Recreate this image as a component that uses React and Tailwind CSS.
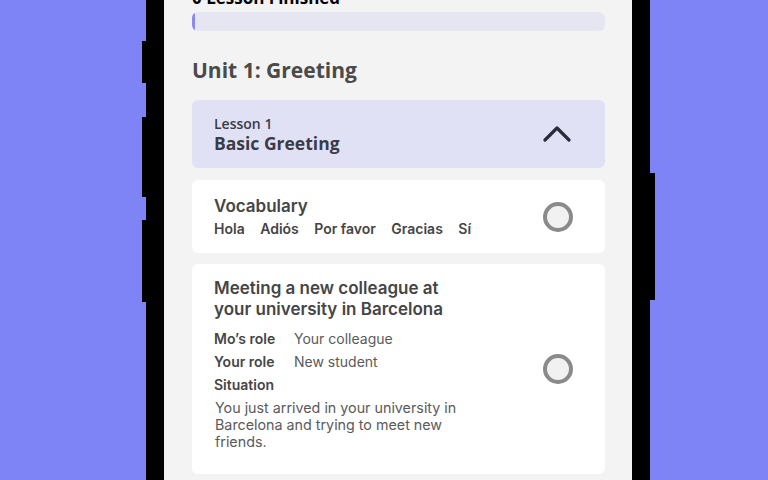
import React from "react";

const heading = { fontFamily: '"Open Sans", "DejaVu Sans", sans-serif' };
const body = { fontFamily: 'Inter, "Noto Sans", sans-serif' };

function StatusRing() {
    return (
        <div className="w-[30px] h-[30px] rounded-full border-[4px] border-[#8a8a8a] bg-[#f1f1f1] shrink-0" />
    );
}

function ChevronUp() {
    return (
        <svg width="28" height="18" viewBox="0 0 28 18" fill="none">
            <path d="M2 15 L14 3 L26 15" stroke="#2c2c3a" strokeWidth="3.2" strokeLinecap="round" strokeLinejoin="round" />
        </svg>
    );
}

export default function App() {
    const words = ["Hola", "Adiós", "Por favor", "Gracias", "Sí"];

    return (
        <div className="w-[768px] h-[480px] bg-[#7e83f6] flex pl-[146px] overflow-hidden">
            <div className="relative w-[504px] h-[480px]">
                {/* side buttons */}
                <div className="absolute left-[-4px] top-[41px] w-[4px] h-[42px] bg-black" />
                <div className="absolute left-[-4px] top-[117px] w-[4px] h-[80px] bg-black" />
                <div className="absolute left-[-4px] top-[220px] w-[4px] h-[82px] bg-black" />
                <div className="absolute right-[-5px] top-[173px] w-[5px] h-[127px] bg-black" />

                <div className="h-full border-x-[18px] border-black bg-[#f3f3f3] overflow-hidden">
                    <div className="px-[28px] pr-[27px] -mt-[12px]">
                        <p className="text-[17px] leading-[20px] font-bold text-black" style={heading}>0 Lesson Finished</p>
                        <div className="mt-[4px] h-[19px] rounded-md bg-[#e6e6f3] overflow-hidden">
                            <div className="w-[3px] h-full bg-[#8c89ea] rounded-full" />
                        </div>

                        <h2 className="mt-[24px] text-[21px] leading-[30px] font-bold text-[#4a4a4a]" style={heading}>Unit 1: Greeting</h2>

                        <div className="mt-[15px] h-[68px] rounded-md bg-[#e1e1f6] flex items-center justify-between pl-[22px] pr-[34px]">
                            <div style={heading}>
                                <p className="text-[14px] leading-[17px] font-semibold text-[#3b3b48]">Lesson 1</p>
                                <p className="text-[17.5px] leading-[22px] font-bold text-[#3b3b48]">Basic Greeting</p>
                            </div>
                            <ChevronUp />
                        </div>

                        <div className="mt-[12px] h-[73px] rounded-md bg-white flex items-center justify-between pl-[22px] pr-[32px]" style={body}>
                            <div>
                                <p className="text-[17px] leading-[22px] font-semibold text-[#454545]">Vocabulary</p>
                                <div className="mt-[3px] flex gap-[15.5px] text-[14px] leading-[18px] font-semibold text-[#454545]">
                                    {words.map((w) => (
                                        <span key={w}>{w}</span>
                                    ))}
                                </div>
                            </div>
                            <StatusRing />
                        </div>

                        <div className="mt-[11px] h-[210px] rounded-md bg-white flex items-center justify-between pl-[22px] pr-[32px]" style={body}>
                            <div className="w-[256px] self-start pt-[14px]">
                                <p className="text-[17px] leading-[21px] font-semibold text-[#454545]">Meeting a new colleague at your university in Barcelona</p>
                                <div className="mt-[10px] grid grid-cols-[80px_1fr] gap-y-[5px] text-[14px] leading-[18px] text-[#454545]">
                                    <span className="font-semibold">Mo’s role</span>
                                    <span className="text-[#5a5a5a]">Your colleague</span>
                                    <span className="font-semibold">Your role</span>
                                    <span className="text-[#5a5a5a]">New student</span>
                                    <span className="font-semibold col-span-2">Situation</span>
                                </div>
                                <p className="mt-[5px] pl-[1px] text-[14.3px] leading-[17px] text-[#5a5a5a]">You just arrived in your university in Barcelona and trying to meet new friends.</p>
                            </div>
                            <StatusRing />
                        </div>
                    </div>
                </div>
            </div>
        </div>
    );
}
